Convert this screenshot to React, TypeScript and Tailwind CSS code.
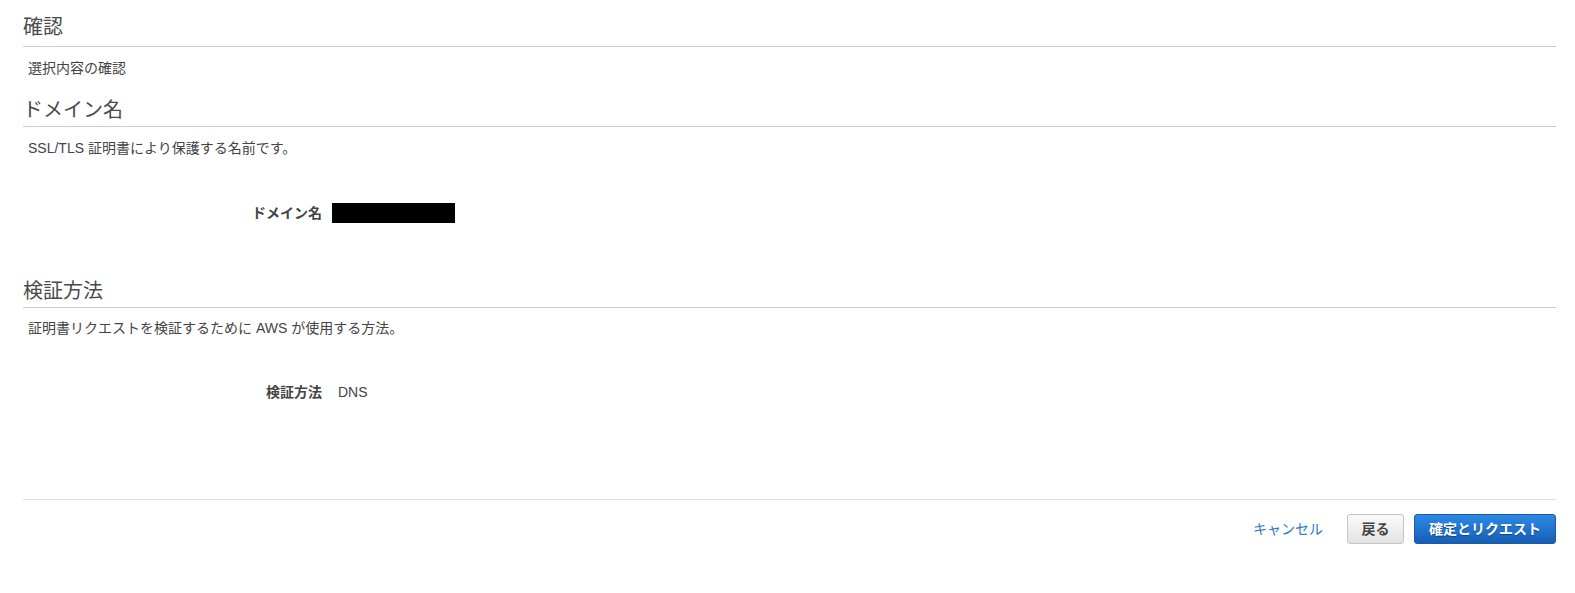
import React from "react";

const font = { fontFamily: '"Liberation Sans", Arial, "Noto Sans CJK JP", sans-serif' };

function Heading({ children, className = "" }: { children: React.ReactNode; className?: string }) {
  return (
    <div className={`border-b border-[#cccccc] ${className}`}>
      <h2 className="text-[20px] leading-[28px] font-normal text-[#4a4a4a]">{children}</h2>
    </div>
  );
}

function Desc({ children, className = "mt-[11px]" }: { children: React.ReactNode; className?: string }) {
  return <p className={`${className} pl-[5px] text-[14px] leading-[20px] text-[#444444]`}>{children}</p>;
}

export default function App() {
  return (
    <div className="min-h-[593px] w-full bg-white" style={font}>
      <div className="ml-[23px] mr-[19px]">
        <Heading className="pt-[13px] pb-[5px]">確認</Heading>
        <Desc>選択内容の確認</Desc>

        <Heading className="mt-[18px] pb-[2px]">ドメイン名</Heading>
        <Desc>SSL/TLS 証明書により保護する名前です。</Desc>

        <div className="mt-[45px] flex h-[20px] items-center">
          <div className="w-[299px] text-right text-[14px] font-bold text-[#444444]">ドメイン名</div>
          <div className="ml-[10px] h-[20px] w-[123px] bg-black" />
        </div>

        <Heading className="mt-[54px] pb-[2px]">検証方法</Heading>
        <Desc className="mt-[10px]">証明書リクエストを検証するために AWS が使用する方法。</Desc>

        <div className="mt-[44px] flex h-[20px] items-center">
          <div className="w-[299px] text-right text-[14px] font-bold text-[#444444]">検証方法</div>
          <div className="ml-[16px] text-[14px] text-[#444444]">DNS</div>
        </div>

        <div className="mt-[97px] border-t border-[#e1e1e1]" />

        <div className="mt-[14px] flex items-center justify-end">
          <a className="text-[14px] text-[#2a79c9] cursor-pointer">キャンセル</a>
          <button className="ml-[24px] h-[30px] w-[57px] rounded-[3px] border border-[#c5c5c5] bg-gradient-to-b from-[#fafafa] to-[#e3e3e3] text-[14px] font-bold text-[#444444]">
            戻る
          </button>
          <button
            className="ml-[10px] h-[30px] w-[142px] rounded-[3px] border border-[#1d5a9e] bg-gradient-to-b from-[#2c8ae6] to-[#165fb6] text-[14px] font-bold text-white"
            style={{ textShadow: "0 1px 1px rgba(0,0,0,0.35)" }}
          >
            確定とリクエスト
          </button>
        </div>
      </div>
    </div>
  );
}
